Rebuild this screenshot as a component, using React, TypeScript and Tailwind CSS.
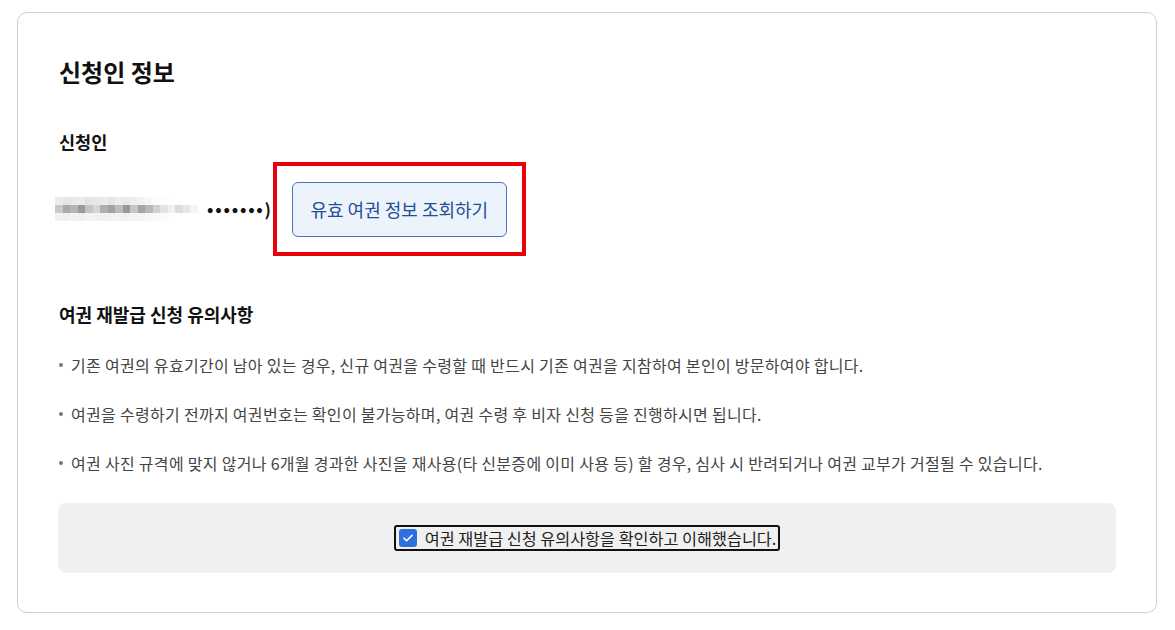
const font = { fontFamily: '"Noto Sans CJK KR", "Noto Sans", sans-serif' };

const notices = [
  '기존 여권의 유효기간이 남아 있는 경우, 신규 여권을 수령할 때 반드시 기존 여권을 지참하여 본인이 방문하여야 합니다.',
  '여권을 수령하기 전까지 여권번호는 확인이 불가능하며, 여권 수령 후 비자 신청 등을 진행하시면 됩니다.',
  '여권 사진 규격에 맞지 않거나 6개월 경과한 사진을 재사용(타 신분증에 이미 사용 등) 할 경우, 심사 시 반려되거나 여권 교부가 거절될 수 있습니다.',
];

// pixelated name (masked)
const blurRows = [
  ['#ececec', '#e6e6e6', '#e9e9e9', '#ebebeb', '#e4e4e4', '#e8e8e8', '#eaeaea', '#e6e6e6', '#ececec', '#e9e9e9', '#eeeeee', '#f3f3f3', '#f8f8f8', '#fbfbfb', '#fdfdfd', '#fefefe', '#ffffff', '#ffffff', '#ffffff', '#ffffff'],
  ['#c9c9c9', '#a9a9a9', '#b5b5b5', '#9a9a9a', '#c4c4c4', '#d6d6d6', '#b0b0b0', '#a2a2a2', '#bdbdbd', '#989898', '#c6c6c6', '#a6a6a6', '#b8b8b8', '#d0d0d0', '#e3e3e3', '#f0f0f0', '#dcdcdc', '#e8e8e8', '#f5f5f5', '#ffffff'],
  ['#f1f1f1', '#eeeeee', '#f2f2f2', '#efefef', '#f3f3f3', '#f1f1f1', '#f0f0f0', '#f2f2f2', '#f3f3f3', '#f1f1f1', '#f4f4f4', '#f5f5f5', '#f7f7f7', '#f9f9f9', '#fbfbfb', '#fdfdfd', '#ffffff', '#ffffff', '#ffffff', '#ffffff'],
];

function MaskedName() {
  return (
    <div className="flex flex-col">
      {blurRows.map((row, i) => (
        <div key={i} className="flex">
          {row.map((c, j) => (
            <div key={j} className="h-[8px] w-[7.5px]" style={{ backgroundColor: c }} />
          ))}
        </div>
      ))}
    </div>
  );
}

export default function App() {
  return (
    <div className="min-h-screen bg-white pt-[12px] pl-[17px]" style={font}>
      <div className="flex h-[601px] w-[1140px] flex-col rounded-[10px] border border-[#cfcfcf] px-[40px] pt-[43px]">
        {/* 신청인 정보 */}
        <h2 className="ml-[1px] text-[24px] font-bold leading-[32px] text-[#111]">신청인 정보</h2>

        <h3 className="mt-[42px] ml-[1px] text-[17.5px] font-bold leading-[24px] text-[#111]">신청인</h3>

        <div className="mt-[8px] flex items-center">
          <div className="-ml-[3px]">
            <MaskedName />
          </div>
          <span className="ml-[2px] text-[17px] font-bold tracking-[1.8px] text-[#111]">•••••••)</span>
          <div className="ml-0 flex h-[94px] w-[253px] items-center justify-center border-[4px] border-[#e8000b] pt-[1px]">
            <button className="h-[55px] w-[215px] rounded-[6px] border border-[#4a74b8] bg-[#edf3fb] text-[18px] text-[#1f4f97]">
              유효 여권 정보 조회하기
            </button>
          </div>
        </div>

        {/* 유의사항 */}
        <h3 className="mt-[45px] ml-[1px] text-[18px] font-bold leading-[26px] text-[#111]">여권 재발급 신청 유의사항</h3>

        <ul className="mt-[27px] flex flex-col gap-[27px]">
          {notices.map((n) => (
            <li key={n} className="flex items-center text-[16px] leading-[22px] tracking-[0.3px] text-[#444]">
              <span className="mr-[8px] ml-[1px] inline-block h-[4px] w-[4px] rounded-full bg-[#777]" />
              {n}
            </li>
          ))}
        </ul>

        <div className="mt-[29px] flex h-[70px] items-center justify-center rounded-[8px] bg-[#f0f0f0]">
          <label className="flex h-[26px] items-center gap-[8px] rounded-[3px] border-2 border-[#111] pr-[2px] pl-[3px] text-[16.25px] text-[#222]">
            <span className="flex h-[18px] w-[18px] items-center justify-center rounded-[3px] bg-[#2f6fe0]">
              <svg width="12" height="12" viewBox="0 0 12 12" fill="none">
                <path d="M2 6.2l2.6 2.6L10 3.4" stroke="white" strokeWidth="1.6" strokeLinecap="round" strokeLinejoin="round" />
              </svg>
            </span>
            여권 재발급 신청 유의사항을 확인하고 이해했습니다.
          </label>
        </div>
      </div>
    </div>
  );
}
